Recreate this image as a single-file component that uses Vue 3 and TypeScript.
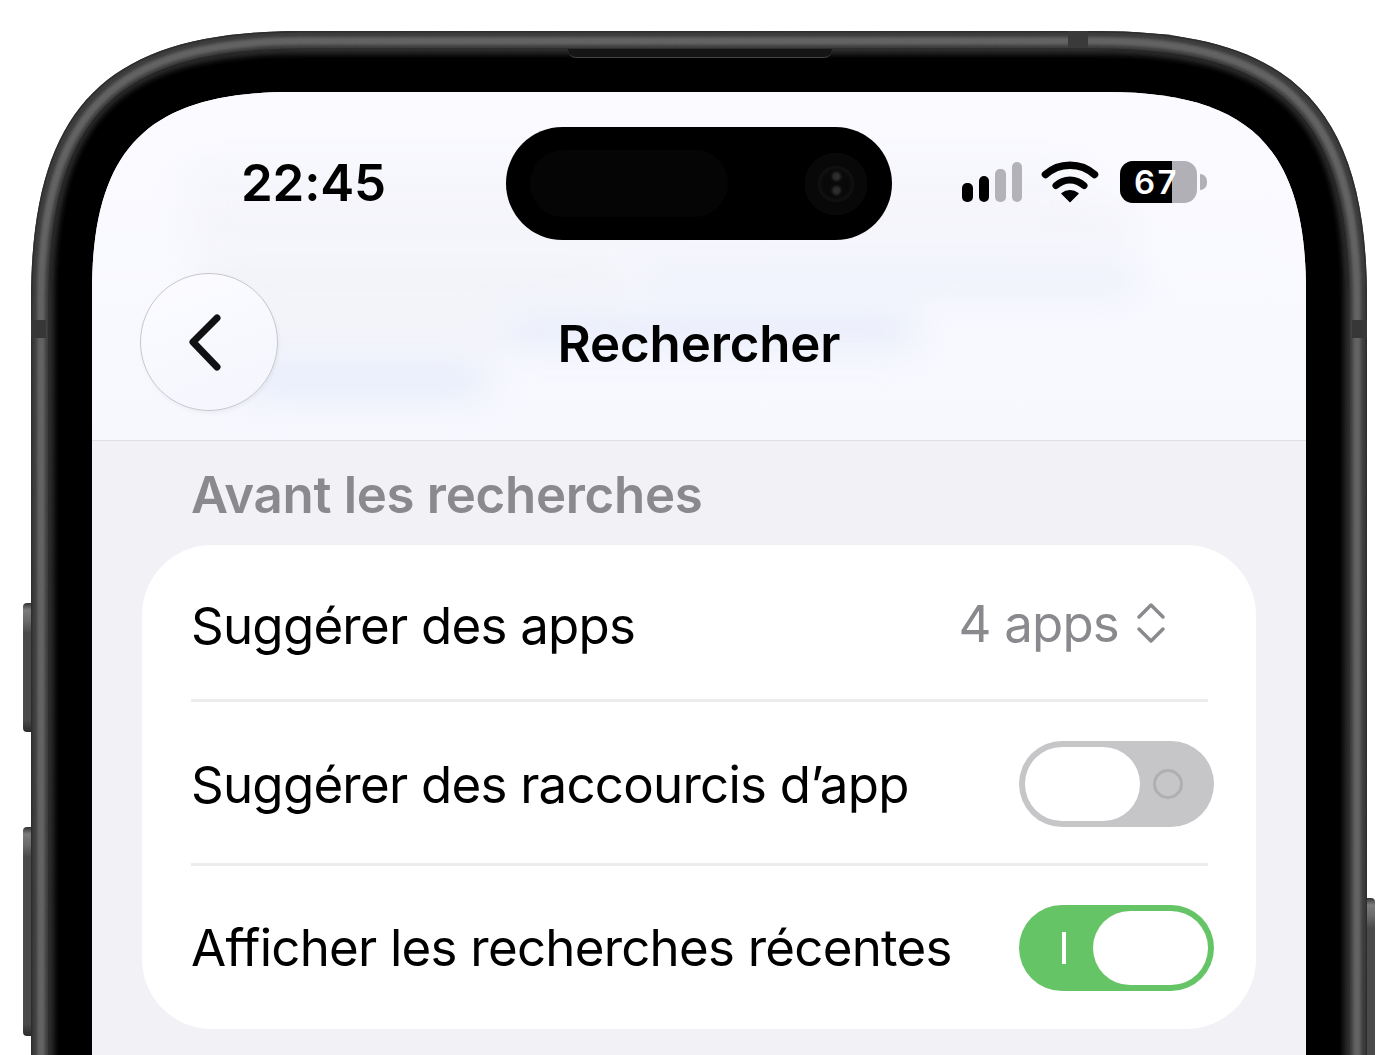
<script setup lang="ts">
interface Row {
  label: string
  kind: 'picker' | 'off' | 'on'
}
const rows: Row[] = [
  { label: 'Suggérer des apps', kind: 'picker' },
  { label: 'Suggérer des raccourcis d’app', kind: 'off' },
  { label: 'Afficher les recherches récentes', kind: 'on' },
]
const bars = [
  { h: 19, on: true },
  { h: 26, on: true },
  { h: 33, on: false },
  { h: 40, on: false },
]

const PHONE_W = 1336
const PHONE_H = 1300

// Rounded-top outline with the continuous corners of the device.
function outline(inset: number, s: number, c: number): string {
  const l = inset
  const t = inset
  const r = PHONE_W - inset
  const b = PHONE_H
  return [
    `M${l} ${b}`,
    `L${l} ${t + s}`,
    `C${l} ${t + c} ${l + c} ${t} ${l + s} ${t}`,
    `L${r - s} ${t}`,
    `C${r - c} ${t} ${r} ${t + c} ${r} ${t + s}`,
    `L${r} ${b}`,
    'Z',
  ].join(' ')
}
const bodyPath = outline(0, 270, 75)
const ridgePath = outline(10, 260, 72)
const seamPath = outline(18, 252, 68)
const bezelPath = outline(19, 250, 66)
const viewBox = `0 0 ${PHONE_W} ${PHONE_H}`
</script>

<template>
  <div class="page">
    <div class="phone">
      <span class="btn btn-left btn-a"></span>
      <span class="btn btn-left btn-b"></span>
      <span class="btn btn-right"></span>
      <svg class="frame" :viewBox="viewBox" :width="PHONE_W" :height="PHONE_H" aria-hidden="true">
        <defs>
          <filter id="soft" x="-5%" y="-5%" width="110%" height="110%">
            <feGaussianBlur stdDeviation="1.800" />
          </filter>
          <filter id="glow" x="-5%" y="-5%" width="110%" height="110%">
            <feGaussianBlur stdDeviation="3" />
          </filter>
          <filter id="grain" x="0" y="0" width="100%" height="100%">
            <feTurbulence type="fractalNoise" baseFrequency="0.8" numOctaves="2" seed="4" result="n" />
            <feColorMatrix in="n" type="matrix" values="0 0 0 0 1  0 0 0 0 1  0 0 0 0 1  0.8 0 0 0 -0.28" result="g" />
            <feComposite in="g" in2="SourceAlpha" operator="in" result="t" />
            <feMerge>
              <feMergeNode in="SourceGraphic" />
              <feMergeNode in="t" />
            </feMerge>
          </filter>
          <clipPath id="bezel-clip">
            <path :d="bezelPath" />
          </clipPath>
          <clipPath id="body-clip">
            <path :d="bodyPath" />
          </clipPath>
        </defs>
        <path :d="bodyPath" fill="#3c3c3c" />
        <g clip-path="url(#body-clip)">
          <path :d="ridgePath" fill="none" stroke="#636363" stroke-width="8" filter="url(#soft)" />
          <path :d="bodyPath" fill="none" stroke="#2e2e2e" stroke-width="3" />
          <path :d="bodyPath" fill="#000" fill-opacity="0.01" filter="url(#grain)" />
          <rect x="0" y="289" width="15" height="18" fill="#373737" />
          <rect :x="PHONE_W - 15" y="289" width="15" height="18" fill="#373737" />
          <rect x="1037" y="0" width="20" height="17" fill="#3a3a3a" />
        </g>
        <path :d="seamPath" fill="none" stroke="#2a2a2a" stroke-width="1.500" />
        <path :d="bezelPath" fill="#000" />
        <g clip-path="url(#bezel-clip)">
          <path :d="bezelPath" fill="none" stroke="#3e3e3e" stroke-width="6" filter="url(#glow)" />
        </g>
      </svg>
      <span class="speaker"></span>
      <div class="screen">
        <header class="top">
          <div class="blurred" aria-hidden="true">
            <span class="smear s0"></span>
            <span class="smear s1"></span>
            <span class="smear s2"></span>
            <span class="smear s3 blue"></span>
            <span class="smear s4"></span>
            <span class="smear s5 blue"></span>
            <span class="smear s6 blue"></span>
          </div>
          <div class="status">
            <span class="time">22:45</span>
            <div class="island">
              <span class="sensor"></span>
              <span class="lens"><i></i><i></i></span>
            </div>
            <div class="indicators">
              <div class="signal">
                <span
                  v-for="(b, i) in bars"
                  :key="i"
                  class="bar"
                  :class="{ dim: !b.on }"
                  :style="{ height: b.h + 'px' }"
                ></span>
              </div>
              <svg class="wifi" width="58" height="42" viewBox="0 0 58 42">
                <path d="M4.500 13.500C18 1 40 1 53.500 13.500" fill="none" stroke="#000" stroke-width="7.500" stroke-linecap="round" />
                <path d="M15 24.500C23 17 35 17 43 24.500" fill="none" stroke="#000" stroke-width="7" stroke-linecap="round" />
                <path d="M21 32.500C25.500 28.800 32.500 28.800 37 32.500L29 40.500Z" fill="#000" stroke="#000" stroke-width="1.500" stroke-linejoin="round" />
              </svg>
              <div class="battery">
                <div class="cell">
                  <span class="level"></span>
                  <span class="pct">67</span>
                </div>
                <span class="nub"></span>
              </div>
            </div>
          </div>
          <nav class="navbar">
            <button class="back" type="button" aria-label="Retour">
              <svg width="38" height="60" viewBox="0 0 38 60">
                <path d="M31 6L7 30L31 55" fill="none" stroke="#111114" stroke-width="7" stroke-linecap="round" stroke-linejoin="round" />
              </svg>
            </button>
            <h1 class="title">Rechercher</h1>
          </nav>
        </header>
        <main class="content">
          <h2 class="section">Avant les recherches</h2>
          <section class="card">
            <div v-for="row in rows" :key="row.label" class="row">
              <span class="label">{{ row.label }}</span>
              <div v-if="row.kind === 'picker'" class="picker">
                <span>4 apps</span>
                <svg width="30" height="42" viewBox="0 0 30 42">
                  <path d="M3 15L15 3L27 15M3 27L15 39L27 27" fill="none" stroke="#8a8a8e" stroke-width="3.500" stroke-linecap="round" stroke-linejoin="round" />
                </svg>
              </div>
              <div v-else class="switch" :class="row.kind">
                <span v-if="row.kind === 'on'" class="mark-on"></span>
                <span class="knob"></span>
                <span v-if="row.kind === 'off'" class="mark-off"></span>
              </div>
            </div>
          </section>
        </main>
      </div>
    </div>
  </div>
</template>

<style scoped>
.page {
  width: 1400px;
  height: 1055px;
  overflow: hidden;
  background: #fff;
  padding: 31px 33px 0 31px;
  box-sizing: border-box;
  font-family: Inter, "Liberation Sans", sans-serif;
}
.phone {
  position: relative;
  height: 1300px;
  padding: 61px 61px 0;
  box-sizing: border-box;
}
.frame {
  position: absolute;
  left: 0;
  top: 0;
}
.speaker {
  position: absolute;
  left: 537px;
  top: 18px;
  width: 264px;
  height: 9px;
  box-sizing: border-box;
  background: #151515;
  border-bottom: 1px solid #444;
  border-radius: 0 0 8px 8px;
}
.btn {
  position: absolute;
  width: 9px;
  background: linear-gradient(180deg, #333 0, #7c7c7c 7px, #6a6a6a 18px, #4a4a4a 30px, #4a4a4a calc(100% - 12px), #2c2c2c 100%);
}
.btn-left {
  left: -8px;
  border-radius: 4px 0 0 4px;
}
.btn-a {
  top: 572px;
  height: 129px;
}
.btn-b {
  top: 796px;
  height: 209px;
}
.btn-right {
  right: -8px;
  top: 867px;
  height: 200px;
  border-radius: 0 4px 4px 0;
}
.screen {
  position: relative;
  height: 100%;
  overflow: hidden;
  background: #f1f1f6;
  clip-path: path("M0 1300 L0 200 C0 56 56 0 200 0 L1014 0 C1158 0 1214 56 1214 200 L1214 1300 Z");
}
.top {
  position: relative;
  height: 349px;
  box-sizing: border-box;
  background: linear-gradient(180deg, #fafaff 0, #f7f8fe 100%);
  border-bottom: 1px solid #dedee3;
  overflow: hidden;
}
.blurred {
  position: absolute;
  inset: 0;
  filter: blur(17px);
}
.smear {
  position: absolute;
  height: 30px;
  border-radius: 15px;
  background: #eeeff5;
}
.smear.blue {
  background: #e4eafa;
}
.s0 { left: 95px; top: 73px; width: 900px; opacity: 0.4; }
.s1 { left: 95px; top: 118px; width: 945px; opacity: 0.6; }
.s2 { left: 105px; top: 173px; width: 430px; opacity: 0.9; }
.s3 { left: 545px; top: 173px; width: 500px; opacity: 0.5; }
.s4 { left: 150px; top: 223px; width: 260px; opacity: 0.8; }
.s5 { left: 410px; top: 223px; width: 415px; opacity: 0.9; }
.s6 { left: 150px; top: 273px; width: 245px; }
.status {
  position: relative;
  height: 148px;
  box-sizing: border-box;
  display: flex;
  align-items: flex-start;
  padding: 35px 0 0 149px;
}
.time {
  margin-top: 28px;
  width: 265px;
  font-size: 51px;
  line-height: 56px;
  font-weight: 600;
  letter-spacing: -0.200px;
  color: #000;
}
.island {
  flex: none;
  width: 386px;
  height: 113px;
  border-radius: 57px;
  background: #000;
  display: flex;
  align-items: center;
  justify-content: space-between;
  padding: 0 25px 0 24px;
  box-sizing: border-box;
}
.sensor {
  width: 198px;
  height: 67px;
  border-radius: 34px;
  background: #050505;
}
.lens {
  width: 62px;
  height: 62px;
  border-radius: 50%;
  background: #090909;
  display: flex;
  flex-direction: column;
  align-items: center;
  justify-content: center;
  gap: 5px;
  box-shadow: inset 0 0 0 13px #080808, inset 0 0 4px 15px #161616;
}
.lens i {
  width: 9px;
  height: 9px;
  border-radius: 50%;
  background: #2e2e2e;
  filter: blur(1px);
}
.indicators {
  display: flex;
  align-items: center;
  margin-left: 70px;
  margin-top: 33px;
  height: 44px;
}
.signal {
  display: flex;
  align-items: flex-end;
  gap: 6px;
  height: 40px;
}
.bar {
  width: 10.500px;
  border-radius: 5px;
  background: #000;
}
.bar.dim {
  background: #b2b2b8;
}
.wifi {
  margin-left: 19px;
}
.battery {
  display: flex;
  align-items: center;
  margin-left: 21px;
}
.cell {
  position: relative;
  width: 77px;
  height: 42px;
  border-radius: 13px;
  overflow: hidden;
  background: #b0b0b6;
}
.level {
  position: absolute;
  inset: 0 25px 0 0;
  background: #000;
}
.pct {
  position: absolute;
  left: 14px;
  top: 0;
  line-height: 42px;
  font-size: 33px;
  font-weight: 600;
  color: #fff;
  letter-spacing: 2.500px;
}
.nub {
  width: 7px;
  height: 16px;
  margin-left: 3px;
  border-radius: 0 8px 8px 0;
  background: #b0b0b6;
}
.navbar {
  position: relative;
  height: 138px;
  margin-top: 33px;
  display: flex;
  align-items: center;
  justify-content: center;
}
.back {
  position: absolute;
  left: 48px;
  top: 0;
  width: 138px;
  height: 138px;
  padding: 0;
  border-radius: 50%;
  border: 1px solid #c6c6cb;
  background: linear-gradient(160deg, #fbfbff, #f4f6fd);
  box-shadow: 1px 2px 4px rgba(0, 0, 0, 0.05);
  display: flex;
  align-items: center;
  justify-content: center;
}
.back svg {
  margin-right: 8px;
}
.title {
  margin: 4px 0 0;
  font-size: 51px;
  line-height: 60px;
  font-weight: 600;
  letter-spacing: -0.150px;
  color: #000;
}
.content {
  padding: 24px 50px 0;
}
.section {
  margin: 0 0 20px 49px;
  font-size: 51px;
  line-height: 60px;
  font-weight: 600;
  letter-spacing: -0.300px;
  color: #8a8a8e;
}
.card {
  border-radius: 70px;
  background: #fff;
  padding: 0 48px 0 49px;
}
.row {
  height: 164px;
  padding-top: 4px;
  display: flex;
  align-items: center;
  justify-content: space-between;
  border-bottom: 3px solid #ececee;
  box-sizing: border-box;
}
.row:first-child {
  height: 157px;
  padding-top: 7px;
}
.row:last-child {
  height: 163px;
  padding-top: 1px;
  border-bottom: 0;
}
.label {
  font-size: 51px;
  line-height: 60px;
  letter-spacing: -0.760px;
  color: #000;
}
.picker {
  display: flex;
  align-items: center;
  gap: 17px;
  margin: -5px 42px 0 0;
  font-size: 51px;
  letter-spacing: -0.800px;
  color: #8a8a8e;
}
.switch {
  position: relative;
  width: 195px;
  height: 86px;
  margin-right: -6px;
  border-radius: 43px;
  box-sizing: border-box;
  padding: 6px;
  display: flex;
  align-items: center;
}
.switch.off {
  margin-top: -2px;
  background: #c6c6c8;
}
.switch.on {
  background: #65c466;
  justify-content: flex-end;
}
.knob {
  width: 115px;
  height: 74px;
  border-radius: 37px;
  background: #fff;
  flex: none;
}
.mark-off {
  width: 30px;
  height: 30px;
  margin-left: 13px;
  border-radius: 50%;
  border: 3px solid #afafb1;
  box-sizing: border-box;
}
.mark-on {
  width: 4px;
  height: 32px;
  margin-right: 27px;
  background: #fff;
}
</style>
